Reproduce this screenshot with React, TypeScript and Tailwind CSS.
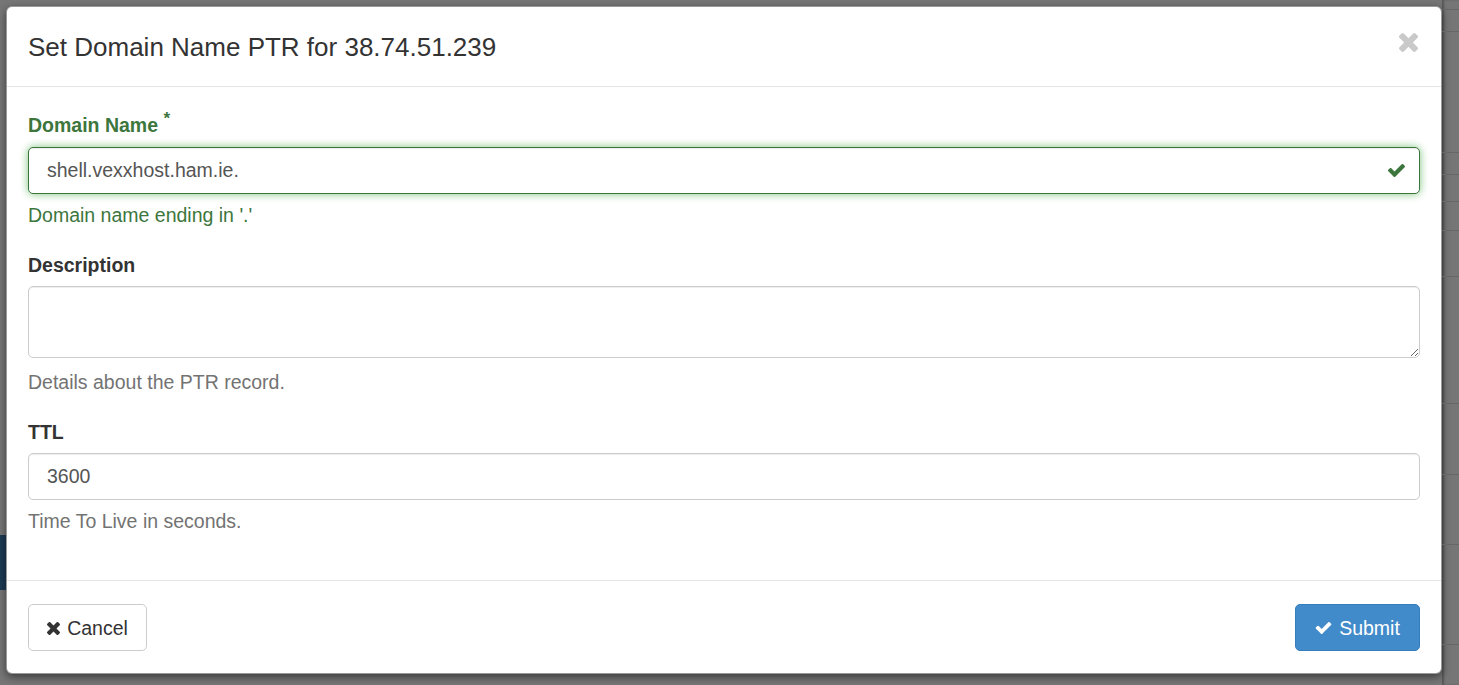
import React from 'react';

const CHECK = 'M1671 566q0 40-28 68l-724 724-136 136q-28 28-68 28t-68-28l-136-136-362-362q-28-28-28-68t28-68l136-136q28-28 68-28t68 28l294 295 656-657q28-28 68-28t68 28l136 136q28 28 28 68z';
const TIMES = 'M1490 1322q0 40-28 68l-136 136q-28 28-68 28t-68-28l-294-294-294 294q-28 28-68 28t-68-28l-136-136q-28-28-28-68t28-68l294-294-294-294q-28-28-28-68t28-68l136-136q28-28 68-28t68 28l294 294 294-294q28-28 68-28t68 28l136 136q28 28 28 68t-28 68l-294 294 294 294q28 28 28 68z';

const CheckIcon: React.FC<{ className?: string }> = ({ className }) => (
    <svg className={className} viewBox="121 334 1550 1188" fill="currentColor"><path d={CHECK} /></svg>
);

const TimesIcon: React.FC<{ className?: string }> = ({ className }) => (
    <svg className={className} viewBox="302 366 1188 1188" fill="currentColor"><path d={TIMES} /></svg>
);

// rows of the page behind the backdrop, only a sliver shows on the right
const rightRows = [10, 22, 121, 22, 27, 29, 46, 127, 71, 70, 100];

export default function App() {
    return (
        <div className="h-[685px] w-full overflow-hidden bg-[#767676] flex font-['Liberation_Sans',Arial,sans-serif]">
            <div className="w-[6px] shrink-0 flex flex-col">
                <div className="h-[535px]" />
                <div className="h-[55px] bg-[#1d3a55]" />
            </div>

            <div className="mt-[6px] h-[668px] w-[1436px] shrink-0 bg-white border border-black/40 rounded-[6px] shadow-[0_3px_9px_rgba(0,0,0,0.5)] flex flex-col">
                <div className="h-[80px] shrink-0 border-b border-[#e5e5e5] pl-[21px] pr-[23px] flex items-center justify-between">
                    <h4 className="text-[26px] text-[#333] leading-none">Set Domain Name PTR for 38.74.51.239</h4>
                    <button className="text-[#c9c9c9] mb-[8px]">
                        <TimesIcon className="w-[19px] h-[19px]" />
                    </button>
                </div>

                <div className="h-[493px] shrink-0 px-[21px] pt-[25px] flex flex-col">
                    <label className="block text-[19.5px] leading-[27px] font-bold text-[#3c763d]">
                        Domain Name <span className="relative -top-[8px] text-[17px]">*</span>
                    </label>
                    <div className="relative mt-[7px]">
                        <input
                            type="text"
                            defaultValue="shell.vexxhost.ham.ie."
                            className="block w-full h-[47px] px-[18px] text-[19.5px] text-[#555] bg-white border border-[#3c763d] rounded-[5px] shadow-[inset_0_1px_1px_rgba(0,0,0,0.075),0_0_8px_#7cc47d] outline-none"
                        />
                        <CheckIcon className="absolute right-[15px] top-[17px] w-[17px] h-[13px] text-[#3c763d]" />
                    </div>
                    <p className="mt-[8px] text-[19.5px] leading-[27px] text-[#3c763d]">Domain name ending in '.'</p>

                    <label className="block mt-[23px] text-[19.5px] leading-[27px] font-bold text-[#333]">Description</label>
                    <textarea className="block mt-[7px] w-full h-[72px] px-[18px] py-[10px] text-[19.5px] text-[#555] bg-white border border-[#ccc] rounded-[5px] shadow-[inset_0_1px_1px_rgba(0,0,0,0.075)] outline-none" />
                    <p className="mt-[11px] text-[19.5px] leading-[27px] text-[#737373]">Details about the PTR record.</p>

                    <label className="block mt-[23px] text-[19.5px] leading-[27px] font-bold text-[#333]">TTL</label>
                    <input
                        type="text"
                        defaultValue="3600"
                        className="block mt-[7px] w-full h-[47px] px-[18px] text-[19.5px] text-[#555] bg-white border border-[#ccc] rounded-[5px] shadow-[inset_0_1px_1px_rgba(0,0,0,0.075)] outline-none"
                    />
                    <p className="mt-[8px] text-[19.5px] leading-[27px] text-[#737373]">Time To Live in seconds.</p>
                </div>

                <div className="flex-1 border-t border-[#e5e5e5] px-[21px] pt-[23px] flex justify-between items-start">
                    <button className="w-[119px] h-[47px] pt-[3px] flex items-center justify-center gap-[7px] bg-white border border-[#ccc] rounded-[5px] text-[19.5px] text-[#333]">
                        <TimesIcon className="w-[13px] h-[13px] -mt-[2px]" />
                        Cancel
                    </button>
                    <button className="w-[125px] h-[47px] pt-[3px] flex items-center justify-center gap-[7px] bg-[#428bca] border border-[#357ebd] rounded-[5px] text-[19.5px] text-white">
                        <CheckIcon className="w-[17px] h-[12px] -mt-[2px]" />
                        Submit
                    </button>
                </div>
            </div>

            <div className="flex-1 flex flex-col shadow-[inset_2px_0_2px_rgba(0,0,0,0.25)]">
                {rightRows.map((h, i) => (
                    <div key={i} className="border-b border-[#666]" style={{ height: h }} />
                ))}
            </div>
        </div>
    );
}
